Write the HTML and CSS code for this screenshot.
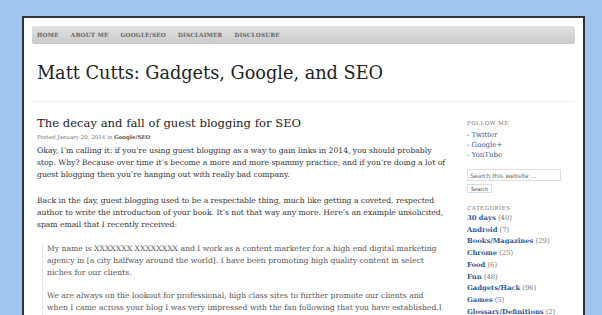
FILE: index.html
```html
<!DOCTYPE html>
<html lang="en">

<head>
    <meta charset="UTF-8">
    <meta name="viewport" content="width=device-width, initial-scale=1.0">
    <title>Matt Cutts: Gadgets, Google, and SEO</title>
    <!-- page styles -->
    <link rel="stylesheet" href="styles.css">
</head>

<body>
    <!-- main wrapper -->
    <div class="site">
        <!-- top navigation -->
        <ul class="nav">
            <li>Home</li>
            <li>About Me</li>
            <li>Google/SEO</li>
            <li>Disclaimer</li>
            <li>Disclosure</li>
        </ul>
        <!-- site title -->
        <h1 class="site-title">Matt Cutts: Gadgets, Google, and SEO</h1>

        <div class="content">
            <!-- post -->
            <div class="post">
                <h2 class="post-title">The decay and fall of guest blogging for SEO</h2>
                <p class="meta">Posted January 20, 2014 in <b>Google/SEO</b></p>
                <p>Okay, I’m calling it: if you’re using guest blogging as a way to gain links in 2014, you should probably<br>
                    stop. Why? Because over time it’s become a more and more spammy practice, and if you’re doing a lot of<br>
                    guest blogging then you’re hanging out with really bad company.</p>
                <p>Back in the day, guest blogging used to be a respectable thing, much like getting a coveted, respected<br>
                    author to write the introduction of your book. It’s not that way any more. Here’s an example unsolicited,<br>
                    spam email that I recently received:</p>
                <blockquote>
                    <p>My name is XXXXXXX XXXXXXXX and I work as a content marketer for a high end digital marketing<br>
                        agency in [a city halfway around the world]. I have been promoting high quality content in select<br>
                        niches for our clients.</p>
                    <p>We are always on the lookout for professional, high class sites to further promote our clients and<br>
                        when I came across your blog I was very impressed with the fan following that you have established.I<br>
                        think could be a great relevant partner, and I would love to partner with you to publish some<br>
                        of our content.</p>
                </blockquote>
            </div>

            <!-- sidebar -->
            <div class="sidebar">
                <h4>Follow Me</h4>
                <ul class="follow">
                    <li>- <a href="#">Twitter</a></li>
                    <li>- <a href="#">Google+</a></li>
                    <li>- <a href="#">YouTube</a></li>
                </ul>
                <input class="search" type="text" value="Search this website ...">
                <button class="search-btn">Search</button>
                <h4 class="cat-title">Categories</h4>
                <ul class="cats">
                    <li><a href="#">30 days</a> (40)</li>
                    <li><a href="#">Android</a> (7)</li>
                    <li><a href="#">Books/Magazines</a> (29)</li>
                    <li><a href="#">Chrome</a> (25)</li>
                    <li><a href="#">Food</a> (6)</li>
                    <li><a href="#">Fun</a> (48)</li>
                    <li><a href="#">Gadgets/Hack</a> (96)</li>
                    <li><a href="#">Games</a> (5)</li>
                    <li><a href="#">Glossary/Definitions</a> (2)</li>
                    <li><a href="#">Google/SEO</a> (410)</li>
                </ul>
            </div>
        </div>
    </div>
</body>

</html>
```

FILE: styles.css
```css
/* page body */
body {
    margin: 0;
    padding-top: 16px;
    background-color: #9ec6ef;
    font-family: "DejaVu Serif", serif;
    color: #333;
    height: 315px;
    overflow: hidden;
}

/* white box with dark border */
.site {
    margin-left: 22px;
    width: 543px;
    padding: 8px 8px 0;
    background-color: #fff;
    border: 2px solid #333;
    border-bottom: none;
    min-height: 400px;
}

/* top menu bar */
.nav {
    list-style: none;
    margin: 0;
    padding: 0 0 0 5px;
    height: 18px;
    display: flex;
    align-items: center;
    gap: 12px;
    background: linear-gradient(#e2e2e2, #c9c9c9);
    border-radius: 2px;
}

.nav li {
    font-size: 5.7px;
    font-weight: bold;
    text-transform: uppercase;
    letter-spacing: 0.2px;
    color: #666;
}

/* site title */
.site-title {
    margin: 0;
    padding: 19px 0 18px 5px;
    font-size: 17.7px;
    font-weight: normal;
    color: #222;
    border-bottom: 1px solid #eee;
}

/* main area */
.content {
    display: flex;
    padding: 0 0 0 5px;
}

.post {
    flex: 0 0 405px;
    min-width: 0;
    font-size: 7.65px;
    line-height: 12px;
}

/* lines are broken by hand, like the original */
.post p {
    margin: 0 0 14px;
    white-space: nowrap;
}

.post-title {
    margin: 12px 0 0;
    font-size: 11.6px;
    line-height: 18px;
    font-weight: normal;
    color: #222;
}

.post .meta {
    font-size: 5.5px;
    line-height: 10px;
    color: #777;
    margin-bottom: 3px;
}

.meta b {
    color: #555;
}

/* quoted email */
blockquote {
    margin: -2px 0 0 5px;
    padding: 0 0 0 4px;
    border-left: 1px solid #e6e6e6;
    color: #555;
}

.post blockquote p {
    margin-bottom: 11px;
}

/* right column */
.sidebar {
    flex: 0 0 106px;
    margin-left: 25px;
    font-size: 7px;
    line-height: 10px;
}

.sidebar h4 {
    margin: 16px 0 2px;
    font-size: 5.5px;
    font-weight: normal;
    text-transform: uppercase;
    letter-spacing: 0.5px;
    color: #777;
}

.sidebar ul {
    list-style: none;
    margin: 0;
    padding: 0;
}

.sidebar a {
    color: #2d5b9a;
    text-decoration: none;
}

.follow {
    margin-bottom: 9px !important;
}

.search {
    display: block;
    width: 94px;
    height: 12px;
    box-sizing: border-box;
    padding: 0 2px;
    border: 1px solid #ddd;
    font-family: "DejaVu Sans", sans-serif;
    font-size: 6px;
    color: #666;
}

.search-btn {
    display: block;
    margin-top: 3px;
    height: 9px;
    padding: 0 3px;
    border: 1px solid #ddd;
    background: #fff;
    font-family: "DejaVu Sans", sans-serif;
    font-size: 5px;
    color: #333;
}

.sidebar .cat-title {
    margin-top: 10px;
    margin-bottom: 0;
}

.cats li {
    font-size: 6.8px;
    line-height: 11.7px;
    color: #777;
}

.cats a {
    font-weight: bold;
}
```
